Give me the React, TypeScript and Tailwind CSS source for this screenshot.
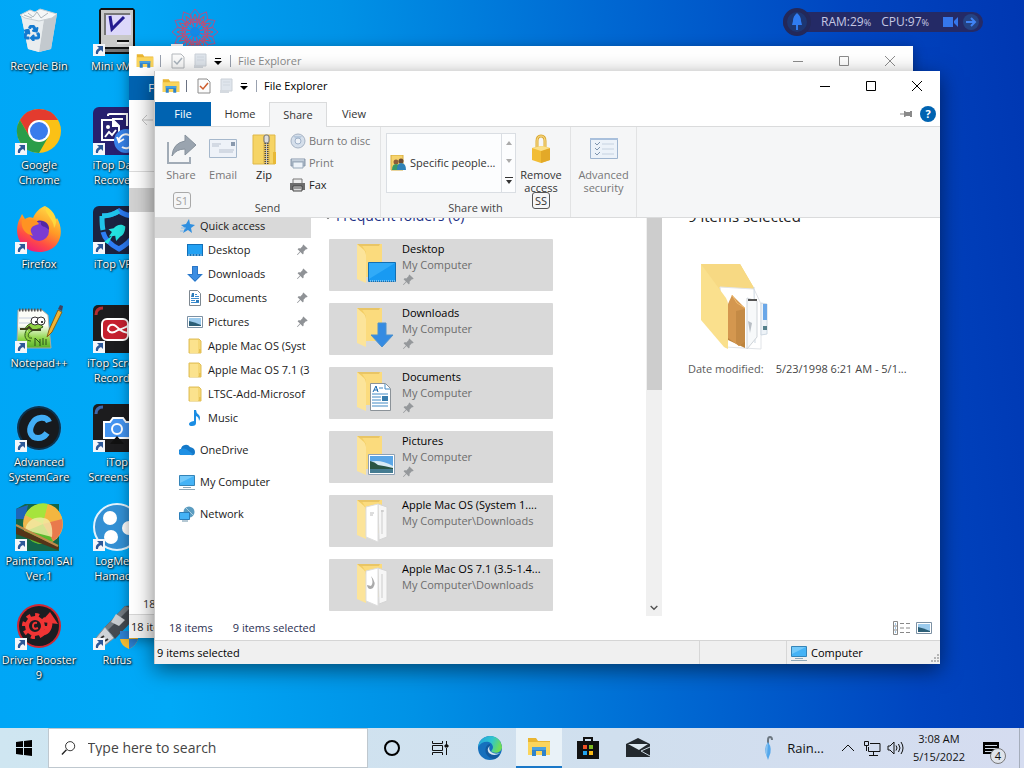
import React from "react";
import { BsPinAngleFill } from "react-icons/bs";
import { FaRecycle } from "react-icons/fa";

type IconProps = { className?: string };

/* ---------- desktop icons ---------- */

const RecycleBin = () => (
  <svg viewBox="0 0 48 48" className="size-12">
    <path d="M6 7 42 5 36 41 24 44 13 41z" fill="#dfe3e6" />
    <path d="M29 11 42 6 36 41 24 44z" fill="#c3c9ce" />
    <path d="M6 7 29 11 24 44 13 41z" fill="#e9edef" />
    <path d="M5 7 15 2l5 2 5-3 7 2 10 3-5 4-13 3L10 10z" fill="#f5f7f8" stroke="#c5ccd1" />
    <path d="m13 5 5 4 4-5 4 6 7-5M9 7l8 3" stroke="#aeb7bd" fill="none" />
    <FaRecycle x="9" y="17" size={16} color="#1479cf" stroke="#1479cf" strokeWidth={36} />
  </svg>
);

const MiniVmac = () => (
  <svg viewBox="0 0 48 48" className="size-12">
    <path d="M6 2 8 0h32l2 2v40l-2 4H8l-2-4z" fill="#111" />
    <path d="M8 2h32v37H8z" fill="#c9c9c9" />
    <path d="M11 5h26v22H11z" fill="#777" />
    <path d="M13 7h25v20H13z" fill="#dcd8fa" />
    <path d="m17 8 2 13L31 9" fill="none" stroke="#241b8f" strokeWidth="3" />
    <path d="M24 33h12" stroke="#111" strokeWidth="2" />
    <path d="M24 35h12" stroke="#fff" />
    <path d="M10 41h28v3H10z" fill="#777" />
  </svg>
);

const Mandala = () => (
  <svg viewBox="0 0 48 48" className="size-12">
    <g fill="none" stroke="#a8568c">
      {[0, 30, 60, 90, 120, 150].map((a) => (
        <g key={a} transform={`rotate(${a} 24 24)`}>
          <path d="M24 1 19 7l2 6-4 4 7 7 7-7-4-4 2-6zM24 47l-5-6 2-6-4-4 7-7 7 7-4 4 2 6z" />
          <path d="m24 6-2 5 2 4 2-4zM24 42l-2-5 2-4 2 4z" stroke="#c44d6c" />
        </g>
      ))}
      <circle cx="24" cy="24" r="13" stroke="#c44d6c" />
    </g>
    <circle cx="24" cy="24" r="5" fill="#1389e6" />
  </svg>
);

const Chrome = () => (
  <svg viewBox="0 0 48 48" className="size-12">
    <circle cx="24" cy="24" r="22" fill="#fbc116" />
    <path d="M24 13h19.100A22 22 0 0 0 4.900 13l9.600 16.500z" fill="#e33b2e" />
    <path d="M4.900 13A22 22 0 0 0 24 46l9.500-16.500-9.500 5.500-9.500-5.500z" fill="#2a9d49" />
    <circle cx="24" cy="24" r="11" fill="#fff" />
    <circle cx="24" cy="24" r="9" fill="#3a7cec" />
  </svg>
);

const DataRecovery = () => (
  <svg viewBox="0 0 48 48" className="size-12">
    <rect width="48" height="48" rx="6" fill="#27206f" />
    <g fill="none" stroke="#fff" strokeWidth="2">
      <path d="M15 9V8q0-1 2-1h17v12M19 12h11" />
      <path d="M9 13h11l6 6v14H9z" />
      <path d="m12 30 4-5 3 3 4-5" />
    </g>
    <path d="M19 12v8h8z" fill="#fff" />
    <circle cx="15" cy="20" r="2" fill="#fff" />
    <circle cx="33" cy="34" r="12" fill="#3884ec" />
    <path d="M26 34a7 7 0 1 1 3 6M24 30l2 5 5-3" fill="none" stroke="#fff" strokeWidth="2" />
  </svg>
);

const Firefox = () => (
  <svg viewBox="0 0 48 48" className="size-12">
    <defs>
      <linearGradient id="ff-body" x1="0.800" y1="0" x2="0.300" y2="1">
        <stop offset="0" stopColor="#ffe14a" />
        <stop offset="0.450" stopColor="#ff9a26" />
        <stop offset="0.750" stopColor="#ff4b45" />
        <stop offset="1" stopColor="#ed1c7c" />
      </linearGradient>
    </defs>
    <path
      d="M30 0c1 6 9 10 10 15l2-3c8 13 4 34-18 34C8 46-1 32 3 17c1-4 3-6 4-9l3 5c3-2 6-2 8-1 3-7 7-10 12-12z"
      fill="url(#ff-body)"
    />
    <circle cx="24" cy="25" r="10" fill="#7a3bd2" />
    <path d="M20 16c6-4 15 0 14 8-4-5-9-2-8-8z" fill="#5326a5" />
    <path d="M7 13c4 1 9 0 14 1l3 4c-3 1-7 2-8 5-1 2 1 5 2 7-7-2-13-7-11-17z" fill="#ff9322" />
    <path d="M30 0c0 9 9 13 9 22 5-7 1-17-9-22z" fill="#ffd83c" />
  </svg>
);

const Vpn = () => (
  <svg viewBox="0 0 48 48" className="size-12">
    <rect width="48" height="48" rx="6" fill="#1b2341" />
    <path d="M9 10c8 0 14-3 17-5 5 4 11 5 17 5 0 19-3 25-17 33-8-4-14-9-16-17" fill="none" stroke="#2d7df5" strokeWidth="5" />
    <path d="M9 10c8 0 14-3 17-5M9 10c0 6 0 10 1 14" fill="none" stroke="#1fc4ea" strokeWidth="5" />
    <path d="M28 18c-4 0-6 2-8 5l-5 2 4 2-2 5 6-2 2 5 3-5c3-2 4-6 3-11z" fill="#23e3e0" transform="rotate(12 24 26)" />
    <path d="m11 36 9-7-5 9z" fill="#23e3e0" />
  </svg>
);

const NotepadPP = () => (
  <svg viewBox="0 0 48 48" className="size-12">
    <defs>
      <linearGradient id="npp" x1="0" y1="0" x2="0" y2="1">
        <stop offset="0.400" stopColor="#fbfdf7" />
        <stop offset="0.750" stopColor="#8fd64a" />
        <stop offset="1" stopColor="#57b02a" />
      </linearGradient>
    </defs>
    <path d="M3 5h24l6 5 3 33H2z" fill="url(#npp)" stroke="#a6aba6" />
    <path d="M4 5h23" stroke="#555" strokeWidth="3" strokeDasharray="1.500 1.500" />
    <path d="M4 13h23M4 18h25M4 23h20" stroke="#c5cfe0" />
    <path d="M10 24c3-8 15-8 18-2-4 3-9 2-13 5-3 3-2 7 2 6M12 24c-4 6-2 12 4 12" fill="#8ed143" stroke="#2d5a18" />
    <path d="M5 24h7l2-2 3 3h9" stroke="#3d421e" fill="none" strokeWidth="2" />
    <circle cx="20" cy="16" r="4" fill="#fff" stroke="#333" />
    <circle cx="26" cy="16" r="4" fill="#fff" stroke="#333" />
    <circle cx="21" cy="17" r="1" />
    <circle cx="27" cy="17" r="1" />
    <path d="M20 33v8M20 33l5 5M25 34v7M28 33v7M31 34v6" stroke="#284d1a" />
    <path d="M43 5 34 25l-2 7 5-5L47 7z" fill="#f0b534" stroke="#83601c" />
    <path d="m43 4 2-4 3 1-1 5z" fill="#41425e" />
  </svg>
);

const ScreenRecorder = () => (
  <svg viewBox="0 0 48 48" className="size-12">
    <rect width="48" height="48" rx="5" fill="#1c1c1e" />
    <path d="M3 10q0-7 7-7" fill="none" stroke="#b12d31" strokeWidth="3" />
    <rect x="9" y="14" width="26" height="21" rx="5" fill="#c5212f" stroke="#fff" strokeWidth="2" />
    <path d="M37 19q-2 3-12 6-7 5-10 0 0-6 6-5c4 1 5 8 16 8" fill="none" stroke="#fff" strokeWidth="2" />
  </svg>
);

const SystemCare = () => (
  <svg viewBox="0 0 48 48" className="size-12">
    <circle cx="24" cy="24" r="23" fill="#14a3ef" />
    <circle cx="24" cy="24" r="22" fill="#0a3451" />
    <circle cx="24" cy="24" r="20" fill="#171a1e" />
    <path d="M34 18c-2-6-13-6-17 2-4 7-1 14 6 14 4 0 7-2 9-5" fill="none" stroke="#41adf5" strokeWidth="6" />
  </svg>
);

const Screenshot = () => (
  <svg viewBox="0 0 48 48" className="size-12">
    <rect width="48" height="48" rx="5" fill="#1c1c1e" />
    <path d="M3 10q0-7 7-7" fill="none" stroke="#3d68ac" strokeWidth="3" />
    <path d="M11 18h6l3-4h10l3 4h8v16H11z" fill="#4494f0" stroke="#fff" strokeWidth="2" />
    <circle cx="24" cy="25" r="5" fill="#4494f0" stroke="#fff" strokeWidth="2" />
    <path d="m17 40 7-8 7 8z" fill="#111" />
  </svg>
);

const PaintTool = () => (
  <svg viewBox="0 0 48 48" className="size-12">
    <path d="M1 6 10 1h34v47H1z" fill="#14664a" />
    <path d="M1 6 13 2l-3 14H1z" fill="#1f65b8" />
    <circle cx="28" cy="21" r="20" fill="#efb84e" />
    <path d="M28 21 10 12A20 20 0 0 1 33 1z" fill="#a6e43c" />
    <path d="M28 21 33 1a20 20 0 0 1 14 15z" fill="#f3b640" />
    <path d="m28 21 19-5a20 20 0 0 1-9 22z" fill="#e97a4c" />
    <path d="M28 21 38 38a20 20 0 0 1-29-9z" fill="#59b92e" />
    <path d="M10 27c2-11 12-15 22-11 4 2 6 9 5 18z" fill="#f3edaa" opacity="0.800" />
    <path d="m1 24 43 20-1 3L1 31z" fill="#543419" />
    <path d="m1 22 42 21" stroke="#c18a4b" strokeWidth="2" />
  </svg>
);

const Hamachi = () => (
  <svg viewBox="0 0 48 48" className="size-12">
    <circle cx="24" cy="24" r="23" fill="#3390d4" stroke="#e2f2fc" strokeWidth="2" />
    <circle cx="17" cy="15" r="7" fill="#fff" />
    <circle cx="36" cy="25" r="7" fill="#fff" />
    <circle cx="18" cy="34" r="7" fill="#fff" />
  </svg>
);

const DriverBooster = () => (
  <svg viewBox="0 0 48 48" className="size-12">
    <circle cx="24" cy="24" r="22" fill="#ce2733" />
    <circle cx="24" cy="24" r="20" fill="#1c1d21" />
    <g stroke="#f03434" fill="none">
      <circle cx="20" cy="24" r="8" strokeWidth="4" />
      <circle cx="20" cy="24" r="11" strokeWidth="4" strokeDasharray="4 4.600" />
      <path d="M24 31c8 1 11-4 11-11" strokeWidth="5" />
      <path d="M22 21q-4-1-4 3t5 2" strokeWidth="2" />
    </g>
    <path d="m26 20 9-10 8 12z" fill="#f03434" />
  </svg>
);

const Rufus = () => (
  <svg viewBox="0 0 48 48" className="size-12">
    <path d="M12 25 32 4l10-1v13L22 37z" fill="#454b51" />
    <path d="M12 25 32 4l5 2-22 22z" fill="#747b81" />
    <path d="m23 12 9 6-6 6-8-4z" fill="#c9cdd0" />
    <path d="m12 25 9 11-10 8-8-8z" fill="#ced3d7" stroke="#858d93" />
    <path d="m8 36 3-2M12 39l3-2" stroke="#333" strokeWidth="2" />
    <path d="M27 29h18v8q-2 7-9 10-8-3-9-10z" fill="#f8bd32" />
    <path d="M27 29h9v8h-9zM36 37h9q-2 7-9 10z" fill="#2f82d4" />
  </svg>
);

const ShortcutArrow = () => (
  <svg viewBox="0 0 12 12" className="absolute bottom-0 left-0 size-3">
    <path d="M0 0h12v12H0z" fill="#f4f6fa" />
    <path d="M4 2h6v6L8 6q-3 1-3 4H3q-1-4 3-6z" fill="#2d5898" />
  </svg>
);

const desktopItems = [
  { name: "Recycle Bin", Icon: RecycleBin, shortcut: false },
  { name: "Google Chrome", Icon: Chrome, shortcut: true },
  { name: "Firefox", Icon: Firefox, shortcut: true },
  { name: "Notepad++", Icon: NotepadPP, shortcut: true },
  { name: "Advanced SystemCare", Icon: SystemCare, shortcut: true },
  { name: "PaintTool SAI Ver.1", Icon: PaintTool, shortcut: true },
  { name: "Driver Booster 9", Icon: DriverBooster, shortcut: true },
  { name: "Mini vMac", Icon: MiniVmac, shortcut: true },
  { name: "iTop Data Recovery", Icon: DataRecovery, shortcut: true },
  { name: "iTop VPN", Icon: Vpn, shortcut: true },
  { name: "iTop Screen Recorder", Icon: ScreenRecorder, shortcut: true },
  { name: "iTop Screenshot", Icon: Screenshot, shortcut: true },
  { name: "LogMeIn Hamachi", Icon: Hamachi, shortcut: true },
  { name: "Rufus", Icon: Rufus, shortcut: true },
  { name: "", Icon: Mandala, shortcut: true },
];

/* ---------- explorer icons ---------- */

const ExplorerIcon = ({ className }: IconProps) => (
  <svg viewBox="0 0 24 20" className={className}>
    <path d="M1 1h8l2 3h12v14H1z" fill="#e9b531" />
    <path d="M1 5h22v13H1z" fill="#fbd55c" />
    <path d="M5 10h14v9h-4v-5H9v5H5z" fill="#2f83ca" />
    <path d="M5 10h14v3H5z" fill="#4ba1df" />
  </svg>
);

const CheckDoc = ({ dim }: { dim?: boolean }) => (
  <svg viewBox="0 0 14 16" className="h-4 w-3.5">
    <path d="M1 1h9l3 3v11H1z" fill="#fbfbfb" stroke={dim ? "#b5b9bd" : "#8c8c8c"} />
    <path d="m3 8 3 3 5-6" fill="none" stroke={dim ? "#aab4bd" : "#cd5b2b"} strokeWidth="1.500" />
  </svg>
);

const BlankDoc = () => (
  <svg viewBox="0 0 14 16" className="h-4 w-3.5">
    <path d="M2 1h11v12H2z" fill="#dfe5ec" stroke="#cbd1d8" />
    <path d="M1 12h9v3H1z" fill="#d5dae0" />
    <path d="M4 4h7M4 7h7" stroke="#d0d7df" />
  </svg>
);

const QuickArrow = () => (
  <svg viewBox="0 0 8 8" className="size-2">
    <path d="M1 1.500h6" stroke="#000" />
    <path d="M0 4h8L4 8z" />
  </svg>
);

const StarIcon = () => (
  <svg viewBox="0 0 16 16" className="size-4">
    <path d="m9 1 1 5 5 1-4 3 1 5-4-3-5 3 2-5-4-3 5-1z" fill="#2f8fe0" />
    <path d="M1 10h5M0 13h4" stroke="#8cbfeb" />
  </svg>
);

const DesktopIcon = () => (
  <svg viewBox="0 0 16 16" className="size-4">
    <path d="M0 2h16v12H0z" fill="#1270b8" />
    <path d="M1 3h14v9H1z" fill="#22a1f3" />
    <path d="M1 13h14" stroke="#a9d9f8" strokeDasharray="2 1" />
  </svg>
);

const DownIcon = () => (
  <svg viewBox="0 0 16 16" className="size-4">
    <path d="M5 0h6v8h5l-8 8-8-8h5z" fill="#3b8de2" />
    <path d="M5.500.5h5v8h4L8 15 1.500 8.500h4z" fill="none" stroke="#2a75c4" />
  </svg>
);

const DocIcon = () => (
  <svg viewBox="0 0 16 16" className="size-4">
    <path d="M2.500.5h8l3 3v12h-11z" fill="#fff" stroke="#7d8790" />
    <path d="M8 4.500h2M8 6.500h4M4 8.500h8M4 10.500h4M4 12.500h8" stroke="#3a8bce" />
    <path d="M5 3h2v4H4zM9 10h3v2H9z" fill="#2d7bb9" />
  </svg>
);

const PicIcon = () => (
  <svg viewBox="0 0 16 16" className="size-4">
    <path d="M.5 2.500h15v11H.5z" fill="#fff" stroke="#7c91a4" />
    <path d="M2 4h12v8H2z" fill="#9ccbed" />
    <path d="M2 7q5 1 12 4v1H2z" fill="#2c5f77" />
  </svg>
);

const FolderSmall = () => (
  <svg viewBox="0 0 16 16" className="size-4">
    <path d="M2 1h10l2 2v12H2z" fill="#f5d775" stroke="#e0bf5b" />
    <path d="M3 2h8v13H3z" fill="#fbe28d" />
    <path d="M12 11h2v4h-2z" fill="#e8c254" />
  </svg>
);

const MusicIcon = () => (
  <svg viewBox="0 0 16 16" className="size-4">
    <path d="M7 0h2q0 3 3 5 2 3 0 6 0-4-3-5v7q0 3-4 3-3 0-3-2t5-3z" fill="#1b8de3" />
  </svg>
);

const OneDriveIcon = () => (
  <svg viewBox="0 0 16 16" className="size-4">
    <path d="M3 13a3 3 0 0 1-1-6 5 5 0 0 1 9-2q5 1 5 5t-4 3z" fill="#1479c9" />
    <path d="M2 7q3-1 5 0l7 5q-1 1-3 1H3q-3 0-3-3 0-2 2-3z" fill="#1f90e4" />
  </svg>
);

const ComputerIcon = () => (
  <svg viewBox="0 0 16 16" className="size-4">
    <path d="M.5 1.500h15v10H.5z" fill="#45b3f6" stroke="#3484b8" />
    <path d="M1 2h14L1 9z" fill="#73c9fa" />
    <path d="M4 13.500h8M0 15.500h16" stroke="#8ea8b8" />
  </svg>
);

const NetworkIcon = () => (
  <svg viewBox="0 0 16 16" className="size-4">
    <circle cx="10" cy="6" r="5.500" fill="#5b9cc0" />
    <path d="M7 2q4 4 7 7" stroke="#a9cfe2" fill="none" />
    <path d="M.5 6.500h10v7H.5z" fill="#45b3f6" stroke="#2c7eb9" />
    <path d="M3 15h6" stroke="#6b91a8" />
  </svg>
);

/* a 48px open folder, with whatever lies in it drawn on top */
const FolderTile = ({ kind }: { kind: string }) => (
  <svg viewBox="0 0 48 48" className="size-12">
    <path d="M7 5h25v33H15z" fill="#f3cd64" />
    <path d="M11 5h21v33H16V13z" fill="#fbdb7d" />
    <path d="M7 5h23l-1 2H9z" fill="#e9c565" />
    <path d="m7 5 7 6q2 2 2 5v28l-9-4z" fill="#fce49a" />
    {kind === "desktop" && (
      <>
        <path d="M18.500 23.500h27v19h-27z" fill="#189af2" stroke="#126fb3" />
        <path d="M19 40V24h26z" fill="#31abf8" />
        <path d="M20 42h25" stroke="#d3ecfa" strokeDasharray="1 1" />
      </>
    )}
    {kind === "downloads" && (
      <path d="M28 20h8v12h7L32 44 21 32h7z" fill="#358be2" stroke="#4d91cd" />
    )}
    {kind === "documents" && (
      <>
        <path d="M20.500 16.500h15l5 5v22h-20z" fill="#fff" stroke="#8b9298" />
        <path d="M35 17v5h5M29 21h4M22 27h16M22 30h9M22 33h9M22 36h16M22 39h16" stroke="#4189c4" fill="none" />
        <path d="m23 25 3-6 2 6m-4-2h4" stroke="#1766aa" fill="none" />
        <path d="M32 29h6v5h-6z" fill="#387dad" />
      </>
    )}
    {kind === "pictures" && (
      <>
        <path d="M18.500 23.500h26v20h-26z" fill="#fff" stroke="#8da1b5" />
        <path d="M20 25h23v17H20z" fill="#5aa6e6" />
        <path d="M20 31q10-3 23 4v3H20z" fill="#d7ebf5" />
        <path d="M20 30q5 1 8 4 7 1 15 3v1H20z" fill="#295544" />
        <path d="M20 38h23v4H20z" fill="#457c92" />
      </>
    )}
    {(kind === "files" || kind === "bird") && (
      <>
        <path d="m28 9 9 3v30l-8 3z" fill="#f6f6f6" stroke="#d5d5d5" />
        <path d="m16 12 12-3v38l-12-5z" fill="#fff" stroke="#ddd" />
        <path d="M32 15v24" stroke="#ccc" />
        {kind === "bird" ? (
          <path d="M21 17q6 7 2 12-5 3-6-3l4 1q3-3 0-10z" fill="#aaa" />
        ) : (
          <path d="M20 18h4M20 20h3M31 16h3" stroke="#bcbcbc" />
        )}
      </>
    )}
  </svg>
);

const BigFolder = () => (
  <svg viewBox="0 0 96 96" className="size-24">
    <path d="M13 5h39l14 24-2 12-44-6z" fill="#f2cf70" />
    <path d="M13 5h39l14 24-36 4z" fill="#f7d983" />
    <path d="m32 28 34 2 7 15v45l-36-2z" fill="#fff" stroke="#e1e4e8" />
    <path d="m66 28 1 56M73 44l6 1v30l-6 1z" fill="#eef3f8" stroke="#cdd8e2" />
    <path d="M75 45h4v16h-4z" fill="#6aa7e8" />
    <path d="M75 67h4v4h-4z" fill="#54808c" />
    <path d="m40 45 17 7v37l-17-8z" fill="#bd843d" />
    <path d="m40 45 4-9 13 13v33l-6 5-11-8z" fill="#d4974f" />
    <path d="m48 52 9-2v32l-6 5-3-3z" fill="#c48a45" />
    <path d="m44 36 5 8 8 5" stroke="#f0bb6f" fill="none" />
    <path d="m59 39 10 3v36l-10 12z" fill="#f7f9fa" stroke="#cfd4d9" />
    <path d="M60 41h9" stroke="#555" strokeWidth="2" />
    <path d="m60 62 4 2-2 10z" fill="#b8bec4" />
    <path d="m13 5 25 34q2 3 2 8v43l-4-2L13 61z" fill="#fae08d" />
  </svg>
);

const Chevron = ({ className }: IconProps) => (
  <svg viewBox="0 0 12 8" className={className} fill="none" stroke="currentColor">
    <path d="m1 1 5 5 5-5" strokeWidth="2" />
  </svg>
);

/* ---------- window chrome ---------- */

const TitleBar = ({ active }: { active?: boolean }) => (
  <header className="flex h-[30px] items-center pl-[7px]">
    <ExplorerIcon className="h-4 w-[18px]" />
    <span className={`ml-1.5 h-3 w-px ${active ? "bg-gray-500" : "bg-gray-400"}`} />
    <button aria-label="Properties" className="ml-2.5">
      <CheckDoc dim={!active} />
    </button>
    <button aria-label="New folder" className="ml-2">
      <BlankDoc />
    </button>
    <button aria-label="Customize Quick Access Toolbar" className="ml-[7px]">
      <QuickArrow />
    </button>
    <span className="ml-2 h-3 w-px bg-gray-400" />
    <h1 className={`ml-[7px] flex-1 ${active ? "text-black" : "text-[#8c8c8c]"}`}>File Explorer</h1>
    <div className={`flex self-stretch ${active ? "text-black" : "text-[#8c8c8c]"}`}>
      <button aria-label="Minimize" className="flex w-[46px] items-center justify-center">
        <svg viewBox="0 0 10 10" className="size-2.5" stroke="currentColor">
          <path d="M0 5.500h10" />
        </svg>
      </button>
      <button aria-label="Maximize" className="flex w-[46px] items-center justify-center">
        <svg viewBox="0 0 10 10" className="size-2.5" stroke="currentColor" fill="none">
          <path d="M.5.5h9v9h-9z" />
        </svg>
      </button>
      <button aria-label="Close" className="flex w-[46px] items-center justify-center">
        <svg viewBox="0 0 10 10" className="size-2.5" stroke="currentColor">
          <path d="m0 0 10 10M10 0 0 10" />
        </svg>
      </button>
    </div>
  </header>
);

const BackWindow = () => (
  <section className="absolute top-[46px] right-[111px] left-[129px] flex h-[592px] flex-col bg-white shadow-[0_3px_12px_rgba(0,0,0,0.4)]">
    <TitleBar />
    <div className="flex h-6">
      <button className="w-14 bg-[#0063b1] text-white">File</button>
    </div>
    <div className="flex h-[72px] items-start border-b border-[#dcdcdc] pt-3.5 pl-3">
      <svg viewBox="0 0 12 12" className="size-3" fill="none" stroke="#c5c5c5">
        <path d="M12 6H1m5-5L1 6l5 5" />
      </svg>
    </div>
    <div className="mt-4 h-6 w-44 bg-[#d2d2d2]" />
    <div className="flex-1" />
    <p className="h-5 pl-3.5 leading-5 text-[#333]">18 items</p>
    <footer className="flex h-6 items-center border-t border-[#d5d5d5] bg-[#f0f0f0] pl-0.5">18 items</footer>
  </section>
);

const BigButton = ({
  label,
  className,
  children,
}: {
  label: string;
  className: string;
  children: React.ReactNode;
}) => (
  <button className={`flex flex-col items-center leading-[13px] ${className}`}>
    <span className="mb-[3px] flex h-8 items-center">{children}</span>
    {label}
  </button>
);

const KeyTip = ({ children, className }: { children: React.ReactNode; className: string }) => (
  <kbd
    className={`absolute top-[59px] flex h-[17px] w-[18px] items-center justify-center rounded-[3px] border font-[inherit] ${className}`}
  >
    {children}
  </kbd>
);

const Ribbon = () => (
  <div className="relative z-10 flex h-[92px] border-y border-[#dadbdc] bg-[#f5f6f7] text-[#444]">
    <div className="flex w-[226px] flex-col border-r border-[#e2e3e4]">
      <div className="flex flex-1 pt-1.5 pl-1 text-[#777]">
        <div className="relative">
          <BigButton label="Share" className="w-11">
            <svg viewBox="0 0 32 32" className="size-8">
              <path d="M3 9v21h22v-6" fill="none" stroke="#a1abb6" strokeWidth="2" />
              <path d="M20 2 31 12 20 22v-6q-9 0-13 7Q8 10 20 8z" fill="#9aa4af" stroke="#87929d" />
            </svg>
          </BigButton>
          <KeyTip className="left-3.5 border-[#a9a9a9] text-[#a0a0a0]">S1</KeyTip>
        </div>
        <BigButton label="Email" className="w-10">
          <svg viewBox="0 0 32 32" className="size-8">
            <path d="M2.500 6.500h27v18h-27z" fill="#eef2f8" stroke="#a6b8cc" />
            <path d="M12 17h15M12 19h14M5 11h9M5 13h7" stroke="#b8c1cf" />
            <path d="M24 9h4v4h-4z" fill="#8999ad" />
          </svg>
        </BigButton>
        <BigButton label="Zip" className="w-[42px] text-[#222]">
          <svg viewBox="0 0 32 32" className="size-8">
            <path d="M5 2h22v29H5z" fill="#f6d465" stroke="#dfb849" />
            <path d="M25 19h3v12h-3z" fill="#e8b937" />
            <path d="M15 2h7v29h-7z" fill="#e6c15a" />
            <path d="M18.500 8v23" stroke="#444" strokeWidth="4" strokeDasharray="1 1" />
            <path d="M18.500 8v23" stroke="#ccc" />
            <rect x="16" y="2" width="5" height="8" rx="2" fill="#ddd" stroke="#777" />
          </svg>
        </BigButton>
        <div className="ml-[5px] flex flex-col">
          <button className="flex h-[22px] items-start gap-[3px] leading-4">
            <svg viewBox="0 0 16 16" className="size-4">
              <circle cx="8" cy="8" r="7" fill="#d5dfeb" stroke="#a6b3c4" />
              <path d="M8 8 3 3h9z" fill="#b6c8dc" />
              <circle cx="8" cy="8" r="3" fill="#edf2f8" stroke="#9fb1c8" />
            </svg>
            Burn to disc
          </button>
          <button className="flex h-[22px] items-start gap-[3px] leading-4">
            <svg viewBox="0 0 16 16" className="size-4">
              <path d="M1 4h14v7H1z" fill="#a9b6c4" stroke="#8999ac" />
              <path d="M3 7h10v6H3z" fill="#edf3f9" stroke="#98a9ba" />
              <path d="M2 5h12" stroke="#dce5ef" />
            </svg>
            Print
          </button>
          <button className="flex h-[22px] items-start gap-[3px] leading-4 text-[#222]">
            <svg viewBox="0 0 16 16" className="size-4">
              <path d="M3 2h9v5H3z" fill="#eee" stroke="#777" />
              <path d="M0 6h15v7H0z" fill="#6d6d6d" />
              <path d="M3 9h9v5H3z" fill="#ddd" stroke="#444" />
              <path d="M4 11h7" stroke="#555" />
            </svg>
            Fax
          </button>
        </div>
      </div>
      <p className="h-[17px] text-center leading-4">Send</p>
    </div>
    <div className="flex w-[190px] flex-col border-r border-[#e2e3e4]">
      <div className="flex flex-1 pt-1.5 pl-[5px]">
        <div className="flex h-[60px] w-[130px] border border-[#dadee3] bg-[#fcfdfe]">
          <button className="flex flex-1 items-center gap-1 pl-[3px] text-[#333]">
            <svg viewBox="0 0 16 16" className="size-4">
              <path d="M1 0h12v15H1z" fill="#f6d36d" stroke="#d6ab3d" />
              <circle cx="6" cy="7" r="2.500" fill="#8c5c39" />
              <circle cx="11" cy="6" r="2.500" fill="#6b4a34" />
              <path d="M2 15q0-6 4-6t4 6z" fill="#3a9a68" />
              <path d="M7 15q0-7 4-7 5 0 5 7z" fill="#2f82b8" />
            </svg>
            Specific people...
          </button>
          <div className="flex w-3.5 flex-col items-center justify-around border-l border-[#dadee3] text-[#aaa]">
            <button aria-label="Row up">
              <svg viewBox="0 0 6 4" className="h-1 w-1.5" fill="currentColor">
                <path d="M0 4h6L3 0z" />
              </svg>
            </button>
            <button aria-label="Row down">
              <svg viewBox="0 0 6 4" className="h-1 w-1.5" fill="currentColor">
                <path d="M0 0h6L3 4z" />
              </svg>
            </button>
            <button aria-label="More">
              <svg viewBox="0 0 8 8" className="size-2 text-[#333]" fill="currentColor">
                <path d="M0 0h8v1H0zM1 3h6L4 7z" />
              </svg>
            </button>
          </div>
        </div>
        <div className="relative">
          <BigButton label="Remove access" className="w-[50px] text-[#333]">
            <svg viewBox="0 0 32 32" className="size-8">
              <path d="M12 15V8q0-5 4-5t4 5v7" fill="none" stroke="#dba931" strokeWidth="3" />
              <path d="M12 15V8q0-5 4-5t4 5v7" fill="none" stroke="#fbe29a" />
              <path d="m7 15 10-2 8 2v12l-9 3-9-3z" fill="#f2bd35" />
              <path d="m16 18 9-3v12l-9 3z" fill="#e3a928" />
              <path d="m7 15 10-2 8 2-9 3z" fill="#fbe08a" />
            </svg>
          </BigButton>
          <KeyTip className="left-4 border-[#555] bg-[#f5f6f7] text-[#333]">SS</KeyTip>
        </div>
      </div>
      <p className="h-[17px] text-center leading-4">Share with</p>
    </div>
    <div className="flex w-[66px] justify-center border-r border-[#e2e3e4] pt-1.5 text-[#777]">
      <BigButton label="Advanced security" className="w-16">
        <svg viewBox="0 0 32 32" className="size-8">
          <path d="M2.500 5.500h27v20h-27z" fill="#ecf2f9" stroke="#9eb4cf" />
          <path d="M2 6h28" stroke="#a9c0dc" strokeWidth="2" />
          <path d="m7 10 2 2 3-3M7 15l2 2 3-3M7 20l2 2 3-3" fill="none" stroke="#7c93ae" />
          <path d="M14 11h12M14 16h12M14 21h12" stroke="#c6d2e0" />
        </svg>
      </BigButton>
    </div>
  </div>
);

const navItems = [
  { name: "Desktop", Icon: DesktopIcon, pinned: true },
  { name: "Downloads", Icon: DownIcon, pinned: true },
  { name: "Documents", Icon: DocIcon, pinned: true },
  { name: "Pictures", Icon: PicIcon, pinned: true },
  { name: "Apple Mac OS (Syst", Icon: FolderSmall, pinned: false },
  { name: "Apple Mac OS 7.1 (3", Icon: FolderSmall, pinned: false },
  { name: "LTSC-Add-Microsof", Icon: FolderSmall, pinned: false },
  { name: "Music", Icon: MusicIcon, pinned: false },
];

const places = [
  { name: "OneDrive", Icon: OneDriveIcon },
  { name: "My Computer", Icon: ComputerIcon },
  { name: "Network", Icon: NetworkIcon },
];

const folders = [
  { name: "Desktop", path: "My Computer", kind: "desktop" },
  { name: "Downloads", path: "My Computer", kind: "downloads" },
  { name: "Documents", path: "My Computer", kind: "documents" },
  { name: "Pictures", path: "My Computer", kind: "pictures" },
  { name: "Apple Mac OS (System 1....", path: "My Computer\\Downloads", kind: "files" },
  { name: "Apple Mac OS 7.1 (3.5-1.4...", path: "My Computer\\Downloads", kind: "bird" },
];

const NavPane = () => (
  <nav className="-mt-1 w-[156px] shrink-0 overflow-hidden whitespace-nowrap">
    <button className="flex h-6 w-full items-center gap-1 bg-[#d9d9d9] pl-[25px]">
      <StarIcon />
      Quick access
    </button>
    {navItems.map(({ name, Icon, pinned }) => (
      <button key={name} className="flex h-6 w-full items-center gap-[5px] pl-8">
        <span className="shrink-0">
          <Icon />
        </span>
        {name}
        {pinned && <BsPinAngleFill size={12} className="mr-[3px] ml-auto text-[#8f9296]" />}
      </button>
    ))}
    {places.map(({ name, Icon }) => (
      <button key={name} className="mt-2 flex h-6 w-full items-center gap-[5px] pl-6">
        <Icon />
        {name}
      </button>
    ))}
  </nav>
);

const FrontWindow = () => (
  <section className="absolute top-[71px] right-[84px] left-[154px] flex h-[593px] flex-col border-l border-[#c8c8c8] bg-white shadow-[0_6px_20px_rgba(0,0,0,0.5)]">
    <TitleBar active />
    <div className="flex h-[25px] items-stretch pt-px text-[#333]">
      <button className="w-14 bg-[#0063b1] text-white">File</button>
      <button className="w-[58px]">Home</button>
      <button className="relative z-20 -mb-px w-[58px] border border-b-0 border-[#dadbdc] bg-[#f5f6f7]">Share</button>
      <button className="w-[54px]">View</button>
      <div className="ml-auto flex items-center gap-2 pr-1">
        <svg viewBox="0 0 12 8" className="h-2 w-3" fill="#8a8a8a">
          <path d="M0 3.500h4V1h1l1 1h4V1h2v6h-2V6H6L5 7H4V4.500H0z" />
        </svg>
        <button
          aria-label="Help"
          className="flex size-4 items-center justify-center rounded-full bg-[#0063b1] font-bold text-white"
        >
          ?
        </button>
      </div>
    </div>
    <Ribbon />
    <div className="flex h-[398px] overflow-hidden">
      <NavPane />
      <main className="min-w-0 flex-1 overflow-hidden pl-[18px]">
        <h2 className="-mt-3 flex h-[33px] items-start gap-1 text-[14px] leading-5 text-[#1e3287]">
          <Chevron className="mt-2 -ml-[5px] h-1.5 w-2 text-[#666]" />
          Frequent folders (6)
        </h2>
        <div className="flex flex-col items-start gap-3">
          {folders.map((f) => (
            <button
              key={f.name}
              className="flex h-13 w-56 items-start rounded-[1px] bg-[#d9d9d9] pl-[21px] text-left leading-4"
            >
              <FolderTile kind={f.kind} />
              <span className="ml-1 flex flex-col pt-0.5 whitespace-nowrap">
                <span className="text-black">{f.name}</span>
                <span className="text-[#6d6d6d]">{f.path}</span>
                {!f.path.includes("\\") && <BsPinAngleFill size={12} className="mt-px text-[#95989b]" />}
              </span>
            </button>
          ))}
        </div>
      </main>
      <div className="flex w-4 shrink-0 flex-col items-center bg-[#f0f0f0]">
        <div className="h-[172px] w-[15px] bg-[#cdcdcd]" />
        <button aria-label="Scroll down" className="mt-auto mb-1">
          <Chevron className="h-2 w-2 text-[#505050]" />
        </button>
      </div>
      <aside className="w-[278px] shrink-0 overflow-hidden pl-[26px]">
        <h2 className="-mt-3 h-[53px] text-[15px] leading-5 text-[#222]">9 items selected</h2>
        <BigFolder />
        <dl className="mt-1.5 flex gap-3 text-[#5a5a5a]">
          <dt>Date modified:</dt>
          <dd className="text-[#444]">5/23/1998 6:21 AM - 5/1...</dd>
        </dl>
      </aside>
    </div>
    <div className="flex flex-1 items-center gap-5 pr-2 pl-3.5 text-[#2b2f52]">
      <span>18 items</span>
      <span>9 items selected</span>
      <div className="ml-auto flex items-center gap-1.5">
        <button aria-label="Details view">
          <svg viewBox="0 0 17 14" className="h-3.5 w-[17px]" fill="none" stroke="#888">
            <path d="M.5.5h4v13h-4zM.5 5h4M.5 9h4M7 2.500h4M7 7h4M7 11.500h4M13 2.500h4M13 7h4M13 11.500h4" />
            <path d="M2 3h1M2 7h1M2 11h1" stroke="#3a8bd0" />
          </svg>
        </button>
        <button aria-label="Large icons view">
          <PicIcon />
        </button>
      </div>
    </div>
    <footer className="flex h-6 border-t border-[#d5d5d5] bg-[#f0f0f0] leading-[23px] text-black">
      <span className="flex-1 pl-0.5">9 items selected</span>
      <span className="w-[88px] border-x border-[#d7d7d7]" />
      <span className="flex w-[153px] items-center gap-1 pl-1">
        <ComputerIcon />
        Computer
        <svg viewBox="0 0 10 10" className="mt-auto ml-auto size-2.5" fill="#b5b5b5">
          <path d="M7 0h2v2H7zM4 3h2v2H4zM7 3h2v2H7zM1 6h2v2H1zM4 6h2v2H4zM7 6h2v2H7z" />
        </svg>
      </span>
    </footer>
  </section>
);

const MonitorWidget = () => (
  <div className="absolute top-2 right-[41px] flex h-7 w-[200px] items-center">
    <div className="absolute inset-x-0 top-1 h-5 rounded-full bg-[#242a66]" />
    <div className="relative flex size-7 items-center justify-center rounded-full border-4 border-[#232859] bg-[#1d3672]">
      <svg viewBox="0 0 12 18" className="h-[18px] w-3" fill="#2f7bf2">
        <path d="M6 0q4 3 4 8l1 4H7v5H5v-5H1l1-4q0-5 4-8z" />
      </svg>
    </div>
    <p className="relative ml-2.5 flex flex-1 gap-2.5 text-[12px] text-[#c5c8e4]">
      <span>
        RAM:29<small className="text-[9px]">%</small>
      </span>
      <span>
        CPU:97<small className="text-[9px]">%</small>
      </span>
    </p>
    <div className="relative flex items-center gap-1 pr-1">
      <svg viewBox="0 0 16 10" className="h-2.5 w-4" fill="#3577ec">
        <path d="M0 0h10v10H0zM11 4l4-4v10l-4-4z" />
      </svg>
      <svg viewBox="0 0 16 16" className="size-4">
        <circle cx="8" cy="8" r="8" fill="#244384" />
        <path d="M3 8h9M8 4l4 4-4 4" fill="none" stroke="#3f83f4" strokeWidth="2" />
      </svg>
    </div>
  </div>
);

/* ---------- taskbar ---------- */

const Taskbar = () => (
  <footer className="relative flex h-10 items-stretch bg-[linear-gradient(90deg,#cfe6f1,#d0dfee_60%,#d5dcf0)] text-[#111]">
    <button aria-label="Start" className="flex w-12 items-center justify-center">
      <svg viewBox="0 0 16 16" className="size-4">
        <path d="m0 2 7-1v6H0zM8 1l8-1v7H8zM0 8h7v7l-7-1zM8 8h8v8l-8-1z" fill="#000" />
      </svg>
    </button>
    <label className="flex w-80 items-center gap-3 border border-[#bfc8cf] bg-white pl-3">
      <svg viewBox="0 0 16 16" className="size-4" fill="none" stroke="#222">
        <circle cx="10" cy="6" r="5" />
        <path d="m6 10-5 5" strokeWidth="1.500" />
      </svg>
      <input
        aria-label="Search"
        placeholder="Type here to search"
        className="w-full bg-transparent text-[14px] outline-none placeholder:text-[#444]"
      />
    </label>
    <button aria-label="Cortana" className="flex w-12 items-center justify-center">
      <span className="size-4 rounded-full border-2 border-black" />
    </button>
    <button aria-label="Task View" className="flex w-12 items-center justify-center">
      <svg viewBox="0 0 18 16" className="h-4 w-[18px]" fill="none" stroke="#111">
        <path d="M1.500 1v2.500h10V1M1.500 15v-2.500h10V15M1.500 5.500h10v5h-10zM15.500 1v4M15.500 8v7" />
        <path d="M14 5h3v2h-3z" fill="#111" />
      </svg>
    </button>
    <button aria-label="Edge" className="flex w-[52px] items-center justify-center">
      <svg viewBox="0 0 24 24" className="size-6">
        <defs>
          <linearGradient id="edge" x1="0" y1="0" x2="1" y2="0.300">
            <stop offset="0" stopColor="#249fdd" />
            <stop offset="0.600" stopColor="#30c5ce" />
            <stop offset="1" stopColor="#6ddc59" />
          </linearGradient>
        </defs>
        <circle cx="12" cy="12" r="12" fill="#1670bd" />
        <path d="M0 11C2-3 22-4 24 11c0 5-6 7-10 5-2-1 1-2 1-5C14 4 4 4 0 11z" fill="url(#edge)" />
        <path d="M12 8c-6 1-7 12 3 15 3 0 6-2 7-5-5 2-9 0-10-3-1-2 0-3 0-7z" fill="#125a9f" />
        <path d="M12 10q-2 3 1 6 4 3 9 1-6 4-11 0-3-4 1-7z" fill="#d8e7f1" />
      </svg>
    </button>
    <button
      aria-label="File Explorer"
      className="flex w-[46px] items-center justify-center border-b-2 border-[#1a78c8] bg-[#e9f2f8]"
    >
      <ExplorerIcon className="h-5 w-6" />
    </button>
    <button aria-label="Microsoft Store" className="ml-0.5 flex w-12 items-center justify-center">
      <svg viewBox="0 0 24 24" className="size-6">
        <path d="M8 6V2h8v4" fill="none" stroke="#111" strokeWidth="2" />
        <path d="M1 5h22v18H1z" fill="#111" />
        <path d="M7 9h4v4H7z" fill="#f05125" />
        <path d="M13 9h4v4h-4z" fill="#7ebb22" />
        <path d="M7 15h4v4H7z" fill="#22a4ee" />
        <path d="M13 15h4v4h-4z" fill="#fbb913" />
      </svg>
    </button>
    <button aria-label="Mail" className="flex w-[52px] items-center justify-center">
      <svg viewBox="0 0 24 20" className="h-5 w-6">
        <path d="m0 6 12-6 12 6v13H0z" fill="#23292e" />
        <path d="M2 6h20l-9 6z" fill="#dce8f0" />
        <path d="m24 9-9 4 9 5" fill="none" stroke="#ccd9e3" />
      </svg>
    </button>
    <div className="ml-auto flex items-center pr-[18px]">
      <button className="flex items-center gap-3 text-[13px]">
        <svg viewBox="0 0 14 24" className="h-6 w-3.5">
          <path d="M7 9V4q0-3 2-3t2 3" fill="none" stroke="#6c7781" strokeWidth="2" />
          <path d="M7 6q5 7 1 15l-1 3-1-3Q2 13 7 6z" fill="#54a7eb" />
          <path d="M7 6q-4 7-1 15z" fill="#89c4f2" />
        </svg>
        Rain...
      </button>
      <button aria-label="Show hidden icons" className="ml-4.5">
        <svg viewBox="0 0 12 8" className="h-2 w-3" fill="none" stroke="#111">
          <path d="m0 7 6-6 6 6" />
        </svg>
      </button>
      <svg viewBox="0 0 17 15" className="ml-2.5 h-[15px] w-[17px]" fill="none" stroke="#111">
        <path d="M6 2.500h10v8H4.500V6M9.500 11v3M5 14.500h9" />
        <path d="M.5.5h4v4h-4zM2.500 5v5" />
      </svg>
      <svg viewBox="0 0 18 16" className="ml-1.5 h-4 w-[18px]" fill="none" stroke="#111">
        <path d="M1 6h2l4-4v12l-4-4H1zM9 5.500q2 2.500 0 5M11.500 4q3 4 0 8M14 2q4 6 0 12" />
      </svg>
      <button className="ml-2 text-center leading-[18px]">
        3:08 AM
        <br />
        5/15/2022
      </button>
      <button aria-label="Notifications" className="relative ml-4.5 h-6 w-[23px]">
        <svg viewBox="0 0 16 16" className="mt-1 size-4">
          <path d="M0 0h16v12h-2v4l-4-4H0z" fill="#000" />
          <path d="M2 3.500h12M2 6.500h12M2 9.500h8" stroke="#cfd8e5" />
        </svg>
        <span className="absolute right-0 -bottom-1 flex size-4 items-center justify-center rounded-full border border-[#777] bg-[#dfe3ea]">
          4
        </span>
      </button>
    </div>
    <span className="absolute inset-y-0 right-1 w-px bg-[#a5adbb]" />
  </footer>
);

export default function App() {
  return (
    <div className="flex h-screen flex-col overflow-hidden bg-[linear-gradient(84deg,#00a6f6_0%,#00a9f7_16%,#0092e6_38%,#0068d2_62%,#0045c0_84%,#0037b2_100%)] font-['Open_Sans','Noto_Sans',sans-serif] text-[11px] leading-4 text-[#1a1a1a]">
      <div className="relative flex-1">
        <div className="grid auto-cols-[78px] grid-flow-col grid-rows-[repeat(7,99px)]">
          {desktopItems.map(({ name, Icon, shortcut }) => (
            <button
              key={name}
              className="flex flex-col items-center pt-2 text-center leading-[15px] text-white [text-shadow:1px_1px_2px_#000,0_0_2px_#000]"
            >
              <span className="relative mb-0.5 size-12 shrink-0">
                <Icon />
                {shortcut && <ShortcutArrow />}
              </span>
              {name}
            </button>
          ))}
        </div>
        <MonitorWidget />
        <BackWindow />
        <FrontWindow />
      </div>
      <Taskbar />
    </div>
  );
}
